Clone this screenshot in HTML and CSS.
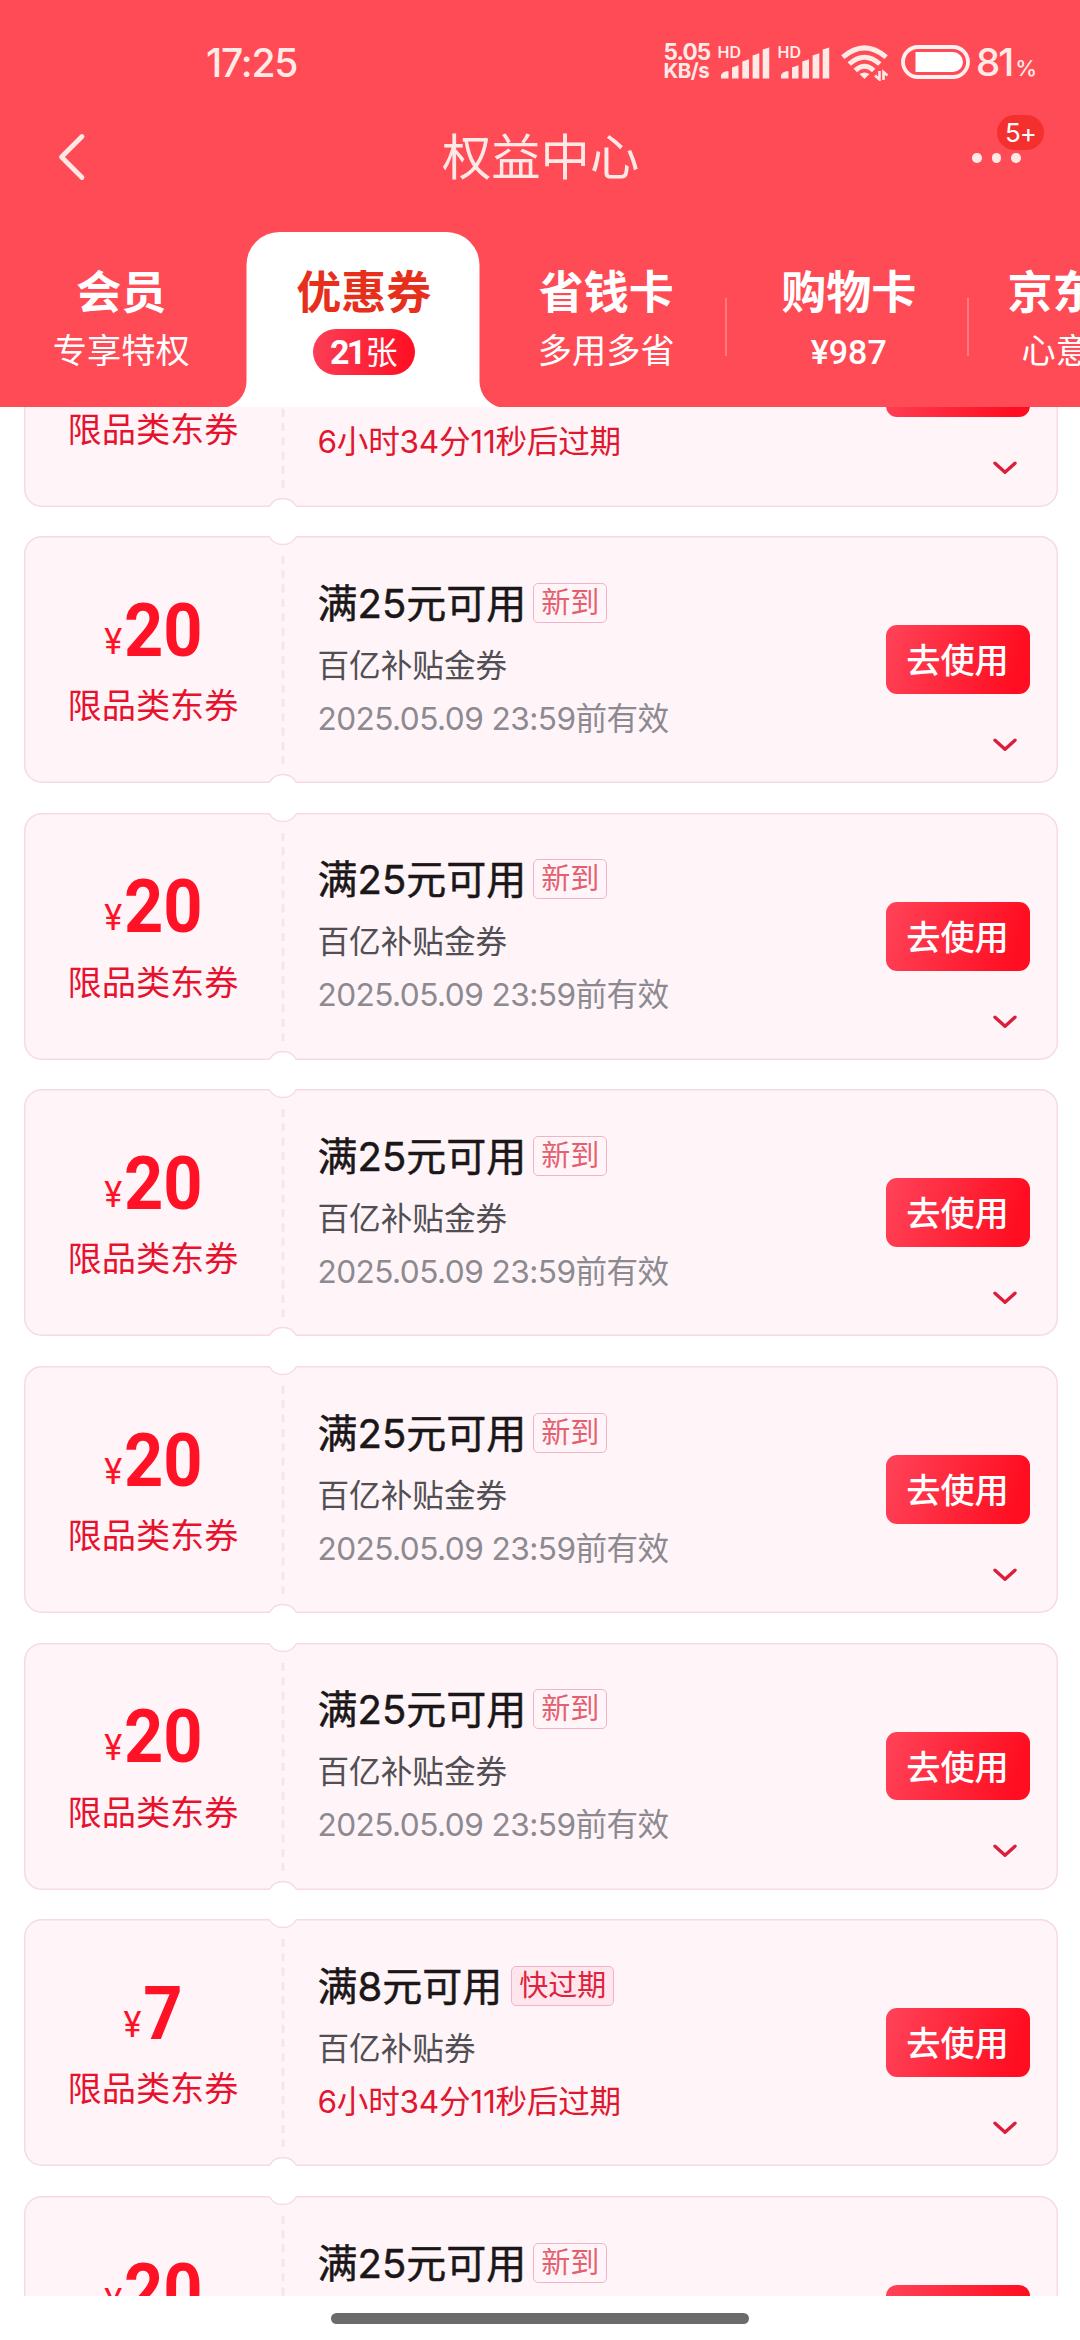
FILE: index.html
```html
<!DOCTYPE html>
<html lang="zh-CN">
<head>
<meta charset="utf-8">
<title>权益中心</title>
<link rel="stylesheet" href="styles.css">
</head>
<body>
<svg class="defs" width="0" height="0">
  <symbol id="ticket" viewBox="0 0 1034 247">
    <path class="ticket-shape" d="M17.700.75H245.500A15.400 15.400 0 0 0 272.300.75H1016A17 17 0 0 1 1033.250 17.750V229.250A17 17 0 0 1 1016.250 246.250H272.300A15.400 15.400 0 0 0 245.500 246.250H17.750A17 17 0 0 1 .75 229.250V17.750A17 17 0 0 1 17.700.75Z"/>
    <path class="ticket-dash" d="M259 20V228"/>
  </symbol>
  <symbol id="down" viewBox="0 0 24 14"><path d="M2 2.200L12 11.200L22 2.200" fill="none" stroke="#d91f3c" stroke-width="3.400" stroke-linecap="round" stroke-linejoin="round"/></symbol>
  <symbol id="bars" viewBox="0 0 50 32">
    <path d="M0 31.500V28Q1.500 25 5 24.200H7.500V31.500ZM11 31.500V20.500L17.500 18.200V31.500ZM21.300 31.500V14.500L28 12.200V31.500ZM31.600 31.500V8.500L38.300 6.200V31.500ZM41.700 31.500V2.500L48.200.5V31.500Z" fill="#ffeae7"/>
  </symbol>
</svg>
<div class="page">
  <header class="header">
    <div class="status">
      <span class="time">17:25</span>
      <div class="indicators">
        <div class="speed"><span>5.05</span><span class="unit">KB/s</span></div>
        <div class="signal"><span class="hd">HD</span><svg width="50" height="32"><use href="#bars"/></svg></div>
        <div class="signal"><span class="hd">HD</span><svg width="50" height="32"><use href="#bars"/></svg></div>
        <svg class="wifi" width="48" height="36" viewBox="0 0 48 36">
          <g fill="none" stroke="#ffeae7" stroke-width="5">
            <path d="M1.800 12.200Q23.500 -6.500 45.200 12.200"/>
            <path d="M8.200 19Q23.500 5.500 38.800 19"/>
            <path d="M14.300 25.500Q23.500 17 32.700 25.500"/>
          </g>
          <path d="M18.500 29Q23.500 26 28.500 29L23.500 34Z" fill="#ffeae7"/>
          <path d="M38.500 26V34.500L34 30.500M42.500 35V27L46.500 30.500" fill="none" stroke="#ffeae7" stroke-width="2.600"/>
        </svg>
        <svg class="battery" width="69" height="34" viewBox="0 0 69 34">
          <rect x="2" y="2" width="65" height="30" rx="15" fill="none" stroke="#fff1ef" stroke-width="3.800"/>
          <path d="M14.500 7H52A10 10 0 0 1 52 27H14.500Z" fill="#fff"/>
        </svg>
        <div class="percent">81<small>%</small></div>
      </div>
    </div>
    <div class="nav">
      <svg class="back" width="30" height="50" viewBox="0 0 30 50"><path d="M25 4.500L4.500 25L25 45.500" fill="none" stroke="#ffe9e6" stroke-width="4.800" stroke-linecap="round" stroke-linejoin="round"/></svg>
      <h1>权益中心</h1>
      <div class="more"><i></i><i></i><i></i><span class="count">5+</span></div>
    </div>
    <nav class="tabs">
      <div class="tab"><b>会员</b><span>专享特权</span></div>
      <div class="tab active">
        <svg class="active-bg" width="286" height="176" viewBox="0 0 286 176"><path d="M0 176A26.500 26.500 0 0 0 26.500 149V33A33 33 0 0 1 59.500 0H226.500A33 33 0 0 1 259.500 33V149A26.500 26.500 0 0 0 286 176Z" fill="#fff"/></svg>
        <b>优惠券</b><span class="pill"><em>21</em>张</span>
      </div>
      <div class="tab"><b>省钱卡</b><span>多用多省</span></div>
      <div class="tab line"><b>购物卡</b><span class="money">¥987</span></div>
      <div class="tab line last"><b>京东</b><span>心意</span></div>
    </nav>
  </header>
  <main class="list" id="list"></main>
  <footer class="home"><i></i></footer>
</div>
<script src="app.js"></script>
</body>
</html>
```
FILE: styles.css
```css
* { box-sizing: border-box; }
body {
  margin: 0;
  background: #fff;
  font-family: Inter, "Noto Sans CJK SC", sans-serif;
}
.defs { position: absolute; }
.page {
  width: 1080px;
  height: 2340px;
  display: flex;
  flex-direction: column;
  overflow: hidden;
}
.header {
  height: 407px;
  flex: none;
  background: #ff4b55;
  color: #fff;
}
.status {
  height: 104px;
  padding: 40px 44px 0 206px;
  display: flex;
  justify-content: space-between;
  align-items: flex-start;
  color: #ffeae7;
}
.time {
  font-size: 39px;
  font-weight: 500;
  line-height: 45px;
  letter-spacing: -1.2px;
}
.indicators { display: flex; align-items: flex-start; }
.speed {
  width: 55px;
  display: flex;
  flex-direction: column;
  font-size: 22.500px;
  font-weight: 700;
  line-height: 18px;
  padding-top: 3px;
  letter-spacing: -.9px;
}
.speed .unit { font-size: 20.500px; line-height: 20px; letter-spacing: -.5px; }
.signal {
  width: 60px;
  height: 40px;
  position: relative;
  padding: 7px 0 0 2px;
}
.hd {
  position: absolute;
  left: -1px;
  top: 4px;
  font-size: 16px;
  font-weight: 600;
  line-height: 17px;
}
.wifi { margin: 5px 0 0 2px; }
.battery { margin: 5px 0 0 12.500px; }
.percent {
  width: 60px;
  margin-left: 6px;
  font-size: 38.500px;
  font-weight: 500;
  line-height: 45px;
  letter-spacing: -2px;
  white-space: nowrap;
}
.percent small { font-size: 22px; margin-left: 3px; letter-spacing: 0; }
.nav {
  height: 106px;
  padding: 0 45px 0 57px;
  display: flex;
  justify-content: space-between;
}
.back { margin-top: 28px; }
.nav h1 {
  flex: 1;
  margin: 0 0 0 355px;
  padding-top: 23px;
  font-size: 49.300px;
  font-weight: 400;
  line-height: 60px;
  color: #ffe9e6;
}
.more {
  position: relative;
  width: 63px;
  padding-top: 49px;
  display: flex;
  gap: 10px;
}
.more i {
  width: 9.500px;
  height: 9.500px;
  border-radius: 50%;
  background: #ffe9e6;
}
.count {
  position: absolute;
  left: 25px;
  top: 11px;
  width: 47px;
  height: 35px;
  border-radius: 18px;
  background: #f4302f;
  font-size: 26px;
  line-height: 35px;
  text-align: center;
  letter-spacing: -1px;
}
.tabs { display: flex; height: 197px; overflow: hidden; }
.tab {
  width: 242.500px;
  flex: none;
  position: relative;
  padding-top: 55px;
  display: flex;
  flex-direction: column;
  align-items: center;
}
.tab b {
  position: relative;
  font-size: 45px;
  font-weight: 700;
  line-height: 56px;
  white-space: nowrap;
}
.tab span {
  position: relative;
  margin-top: 10px;
  font-size: 34.200px;
  line-height: 40px;
  white-space: nowrap;
}
.tab.active b { color: #e6301c; }
.active-bg { position: absolute; left: -22.500px; top: 22px; }
.tab .pill {
  width: 102px;
  height: 46px;
  margin-top: 8px;
  border-radius: 23px;
  font-size: 32px;
  line-height: 47px;
  text-align: center;
  background: linear-gradient(100deg, #fb4058, #ff0c20);
}
.tab em {
  font: 700 34px/46px Roboto, sans-serif;
  letter-spacing: -2.800px;
  margin-right: 2px;
}
.tab .money { font: 500 34px/42px Roboto, sans-serif; }
.tab.line::before {
  content: "";
  position: absolute;
  left: -3px;
  top: 88px;
  width: 2px;
  height: 58px;
  background: #ff7981;
}
.tab.last { align-items: flex-start; padding-left: 37.500px; }
.tab.last span { margin-left: 14px; }
.list {
  height: 1889px;
  flex: none;
  overflow: hidden;
  display: flex;
  flex-direction: column;
  gap: 29.670px;
}
.card {
  position: relative;
  width: 1034px;
  height: 247px;
  flex: none;
  margin-left: 23.500px;
  display: flex;
}
.card:first-child { margin-top: -147.500px; }
.ticket { position: absolute; left: 0; top: 0; }
.ticket-shape { fill: #fff5f8; stroke: #f6dbe3; stroke-width: 1.500px; }
.ticket-dash { fill: none; stroke: #fae2e7; stroke-width: 2.800px; stroke-dasharray: 8 6.300; }
.value {
  position: relative;
  width: 259px;
  padding-top: 66.500px;
  display: flex;
  flex-direction: column;
  align-items: center;
  color: #e6122e;
}
.amount {
  height: 54px;
  font: 700 74.500px/56px Roboto, sans-serif;
  color: #ff1126;
  transform: scaleX(.92);
  display: flex;
  align-items: baseline;
}
.amount small { position: relative; top: -2px; font-size: 37px; font-weight: 400; margin-right: 2px; }
.kind { margin-top: 25.500px; font-size: 34.200px; font-weight: 400; line-height: 48px; }
.info { position: relative; padding: 41.500px 0 0 35px; flex: 1; }
.title { display: flex; align-items: center; height: 52px; }
.title strong {
  font-size: 40px;
  font-weight: 400;
  line-height: 52px;
  color: #1b1719;
  -webkit-text-stroke: .5px #1b1719;
}
.tag {
  height: 40px;
  margin: -2px 0 0 7px;
  padding: 0 7px;
  border: 1.500px solid #f0b4c6;
  border-radius: 5px;
  font-size: 29px;
  font-weight: 400;
  line-height: 38px;
  color: #e5606f;
}
.tag.hot { margin-left: 9px; background: #ffe6ec; color: #de2340; }
.desc { margin-top: 16px; font-size: 31.600px; line-height: 40px; color: #514f54; }
.date { margin-top: 13px; font-size: 31.600px; line-height: 40px; color: #8c8a90; letter-spacing: -.55px; }
.date.soon { color: #e0172f; letter-spacing: -.25px; }
.action {
  position: relative;
  width: 144px;
  margin-right: 28px;
  padding-top: 89px;
}
.use {
  height: 68.700px;
  border-radius: 11px;
  background: linear-gradient(105deg, #ff4359, #ff0d20 90%);
  color: #fff;
  font-size: 34.200px;
  font-weight: 500;
  line-height: 71px;
  text-align: center;
}
.action svg { display: block; margin: 44px 0 0 107px; }
.home { flex: 1; display: flex; justify-content: center; padding-top: 17px; }
.home i { width: 418px; height: 11px; border-radius: 5.500px; background: #6b6b6b; }
```
FILE: app.js
```js
const soon = { yuan: 7, min: 8, tag: '快过期', hot: true, desc: '百亿补贴券', date: '6小时34分11秒后过期' };
const fresh = { yuan: 20, min: 25, tag: '新到', hot: false, desc: '百亿补贴金券', date: '2025.05.09 23:59前有效' };
const coupons = [soon, fresh, fresh, fresh, fresh, fresh, soon, fresh];

document.getElementById('list').innerHTML = coupons.map(c => `
  <section class="card">
    <svg class="ticket" width="1034" height="247"><use href="#ticket"/></svg>
    <div class="value">
      <div class="amount"><small>¥</small>${c.yuan}</div>
      <div class="kind">限品类东券</div>
    </div>
    <div class="info">
      <div class="title"><strong>满${c.min}元可用</strong><span class="tag${c.hot ? ' hot' : ''}">${c.tag}</span></div>
      <div class="desc">${c.desc}</div>
      <div class="date${c.hot ? ' soon' : ''}">${c.date}</div>
    </div>
    <div class="action">
      <div class="use">去使用</div>
      <svg width="24" height="14"><use href="#down"/></svg>
    </div>
  </section>`).join('');
```
